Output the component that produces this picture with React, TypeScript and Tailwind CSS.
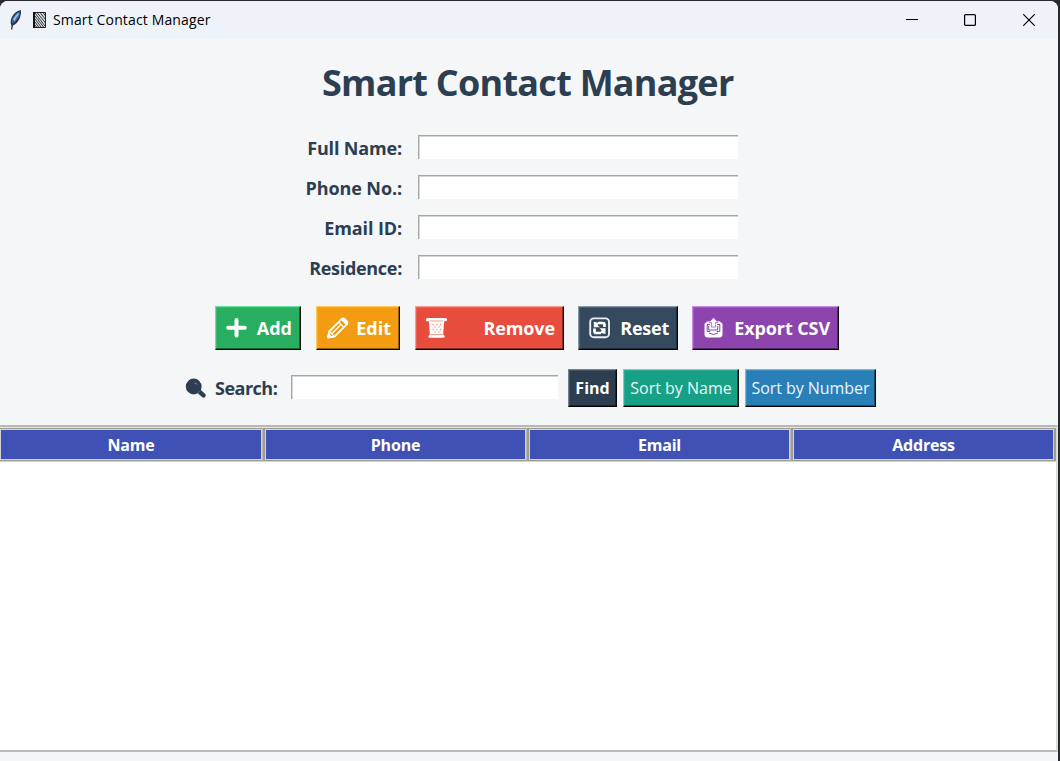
import type { ReactNode } from "react";

const fields = [
  { label: "Full Name:", tracking: "tracking-[-0.15px]" },
  { label: "Phone No.:", tracking: "tracking-[-0.1px]" },
  { label: "Email ID:", tracking: "tracking-[-0.1px]" },
  { label: "Residence:", tracking: "tracking-[-0.3px]" },
];

function Feather() {
  return (
    <svg className="h-[20px] w-[13px] shrink-0" viewBox="0 0 13 20">
      <path d="M11.300.8C8 1.500 3.500 5 2.500 10c-.4 2-.2 4 .5 5.200C6.300 14 9 11 10.500 7c.8-2.200 1.300-4.500.8-6.200Z" fill="#3d78bd" stroke="#2b3543" strokeWidth="1.300" />
      <path d="M9.500 3.500C7 6 5 9 3.800 13" fill="none" stroke="#9cc3ec" strokeWidth="1.500" />
      <path d="M4.500 10.500 2.500 19.500M10 8 5 14" fill="none" stroke="#333" strokeWidth="1.300" />
    </svg>
  );
}

function Notebook() {
  return (
    <svg className="h-[16px] w-[13px] shrink-0" viewBox="0 0 13 16">
      <path d="M.5.5h12v15H.5z" fill="#d8dbe0" stroke="#222" />
      <path d="M1 0v16" stroke="#111" strokeWidth="2" />
      <path d="m2 1 10 13M2 4l9 11.500M2 7l6.500 8.500M2 10l4 5.500M2 13l2 2.500M4 .5 12.500 11M7 .5l5.500 7M10 .5l2.500 3.500" stroke="#222" strokeWidth=".9" />
    </svg>
  );
}

function Plus() {
  return (
    <svg className="h-[22px] w-[22px]" viewBox="0 0 22 22">
      <path d="M10.500 3v15.500M2.200 10.700h16.600" stroke="white" strokeWidth="4" strokeLinecap="round" />
    </svg>
  );
}

function Pencil() {
  return (
    <svg className="h-[22px] w-[22px]" viewBox="0 0 22 22" fill="none" stroke="white" strokeLinejoin="round">
      <path d="m1 20.500 1.200-6L14.500 2.200c1-1 2.200-1 3.200 0l2 2c1 1 1 2.200 0 3.200L7.400 19.700 1 20.500Z" strokeWidth="1.800" />
      <path d="m14.500 2.800 4.500 4.500c1.800-1.500 1.500-2.700.5-3.700l-1.200-1.200c-1.200-1.200-2.500-1-3.800.4Z" fill="white" />
      <path d="m11.500 5 5 5M2.500 14.500l5 5M5 16.500l8.500-8.500" strokeWidth="1.300" />
      <path d="m.8 20.800.8-4 3.200 3.200Z" fill="white" />
    </svg>
  );
}

function Basket() {
  return (
    <svg className="h-[22px] w-[22px]" viewBox="0 0 22 22">
      <path d="M1.500 2.700h18" stroke="white" strokeWidth="3.200" strokeLinecap="round" />
      <path d="M2.700 3h15.600l-1.300 16h-13Z" fill="white" />
      <path d="M4 19.200h13" stroke="white" strokeWidth="3" strokeLinecap="round" />
      <path d="M4 4h13M4.500 17.500h12" stroke="#ee8175" strokeWidth=".8" />
      <path d="M6.500 7.500h1.200m2.500 0h1.200m2.500 0h1.200M8.500 10h1m3 0h1M6.500 12.500h1.200m2.500 0h1.200m2.500 0h1.200M8.500 15h1m3 0h1" stroke="#f18b80" strokeWidth="1.300" />
    </svg>
  );
}

function Refresh() {
  return (
    <svg className="h-[22px] w-[22px]" viewBox="0 0 22 22" fill="none">
      <rect x="1.200" y="1.400" width="18.800" height="18.800" rx="3.500" stroke="#e9eff5" strokeWidth="1.900" />
      <path d="M15.500 10V7.800c0-1-.8-1.800-1.800-1.800H9M5.500 11.500v2.700c0 1 .8 1.800 1.800 1.800H12" stroke="white" strokeWidth="2.700" />
      <path d="M4.800 4.700v5.600h6L8.500 8 10.300 6ZM16.500 17v-5.700h-6l2.300 2.300-1.800 2.200Z" fill="white" />
    </svg>
  );
}

function Outbox() {
  return (
    <svg className="h-[22px] w-[22px]" viewBox="0 0 22 22">
      <path d="M4.500 4.200h12l3 2.500v10.500c0 2-1 3.300-3 3.300h-12c-2 0-3-1.300-3-3.300V6.700Z" fill="white" />
      <path d="M4 7.500h3M14 7.500h3M4.200 7.500v7h3M16.800 7.500v7h-3M5.700 9v4h9V9M6 16l4.500 1.500L15 16" fill="none" stroke="#8e44ad" strokeWidth="1" />
      <path d="M10.500.8 14.800 5.500h-2.200V10H8.400V5.500H6.200Z" fill="white" stroke="#8e44ad" strokeWidth=".7" />
      <path d="M10.500 1 14 5H7Z" fill="white" />
    </svg>
  );
}

function Magnifier() {
  return (
    <svg className="h-[20px] w-[21px] shrink-0" viewBox="0 0 21 20">
      <circle cx="8.700" cy="8.500" r="7.900" fill="#2c3e50" />
      <path d="m13 12.500 5.500 4.800" stroke="#2c3e50" strokeWidth="4.400" strokeLinecap="round" />
      <path d="M9.500 4.800c1.200.1 2 .7 2.300 1.700" stroke="#8294a5" strokeWidth="1" fill="none" />
      <path d="m12.500 15 2.500-2.500" stroke="#6f8191" strokeWidth=".6" />
    </svg>
  );
}

function Entry({ className }: { className: string }) {
  return (
    <input className={`${className} h-6 border-t border-l border-t-[#a6a8a8] border-l-[#a6a8a8] bg-white shadow-[inset_1px_1px_0_#d5d6d6] outline-none`} />
  );
}

function ActionButton({ className, icon, label, text }: { className: string; icon: ReactNode; label: string; text: string }) {
  return (
    <button className={`${className} flex h-[44px] items-center justify-between border border-r-black/90 border-b-black shadow-[inset_-1px_-1px_0_rgba(0,0,0,0.4),inset_1px_1px_0_rgba(255,255,255,0.12)] pr-[8px] pl-[10px] text-[18px] font-bold text-white`}>
      {icon}
      <span className={`${text} whitespace-nowrap`}>{label}</span>
    </button>
  );
}

function HeaderCell({ children, className }: { children: string; className: string }) {
  return (
    <div className={`${className} flex h-[31px] shrink-0 items-center justify-center border border-[#d3d2d4] bg-[#3f51b5] pt-px text-[16px] font-bold tracking-[-0.2px] text-white`}>
      <span>{children}</span>
    </div>
  );
}

function Separator() {
  return <div className="h-[33px] w-[3px] shrink-0 border-l border-l-[#bcb8b2] bg-[#a09d98]" />;
}

export default function App() {
  return (
    <div className="h-[761px] w-[1060px] overflow-hidden bg-[#292a2e] pt-px pr-[2px] font-['Open_Sans','Noto_Sans',sans-serif] text-[#2c3e50]">
      <div className="flex h-[760px] flex-col overflow-hidden rounded-t-lg bg-[#f4f6f8]">
        <header className="flex h-[38px] shrink-0 items-center bg-[#eef3fa] pl-[9px] text-black">
          <Feather />
          <div className="w-[11px]" />
          <Notebook />
          <span className="ml-[7px] pb-[2px] text-[14px] tracking-[0.14px]">Smart Contact Manager</span>
          <div className="mr-[23px] ml-auto flex items-center">
            <svg className="mr-[46px] h-3 w-3" viewBox="0 0 12 12"><path d="M0 5.500h12" stroke="black" /></svg>
            <svg className="mr-[47px] h-3 w-3" viewBox="0 0 12 12"><rect x=".6" y=".6" width="10.800" height="10.800" rx="1" fill="none" stroke="black" strokeWidth="1.200" /></svg>
            <svg className="h-3 w-3" viewBox="0 0 12 12"><path d="m.3.300 11.400 11.400M11.700.300.300 11.700" stroke="black" strokeWidth="1.200" /></svg>
          </div>
        </header>

        <h1 className="mt-[19px] ml-[322px] h-[50px] text-[36px] leading-[50px] font-bold tracking-[-0.74px] whitespace-nowrap">
          <span>Smart Contact Manager</span>
        </h1>

        <form className="mt-[27px] flex flex-col gap-4">
          {fields.map((f) => (
            <label key={f.label} className="flex h-6 items-center">
              <span className={`${f.tracking} mr-[16px] w-[402px] text-right text-[18px] leading-6 font-bold`}><span className="relative top-px">{f.label}</span></span>
              <Entry className="w-80" />
            </label>
          ))}
        </form>

        <div className="mt-[27px] mb-px ml-[215px] flex">
          <ActionButton className="mr-[15px] w-[86px] border-t-[#69df9a] border-l-[#69df9a] bg-[#27ae60]" icon={<Plus />} label="Add" text="" />
          <ActionButton className="mr-[15px] w-[84px] border-t-[#ffc65b] border-l-[#ffc65b] bg-[#f39c12]" icon={<Pencil />} label="Edit" text="" />
          <ActionButton className="mr-[14px] w-[149px] border-t-[#ff9a8e] border-l-[#ff9a8e] bg-[#e74c3c]" icon={<Basket />} label="Remove" text="tracking-[-0.1px]" />
          <ActionButton className="mr-[14px] w-[100px] border-t-[#8596a6] border-l-[#8596a6] bg-[#34495e]" icon={<Refresh />} label="Reset" text="tracking-[-0.25px]" />
          <ActionButton className="w-[147px] border-t-[#c989e8] border-l-[#c989e8] bg-[#8e44ad]" icon={<Outbox />} label="Export CSV" text="tracking-[-0.1px]" />
        </div>

        <div className="mt-[18px] ml-[185px] flex h-[38px] items-center">
          <Magnifier />
          <span className="ml-[9px] w-[76px] text-[18px] font-bold tracking-[-0.5px]">Search:</span>
          <Entry className="mr-[10px] mb-[2px] w-[267px] shrink-0" />
          <button className="mr-[6px] h-[38px] w-[49px] border border-t-[#738191] border-r-black/90 border-b-black border-l-[#738191] bg-[#2c3e50] text-[16px] font-bold text-white shadow-[inset_-1px_-1px_0_rgba(0,0,0,0.4),inset_1px_1px_0_rgba(255,255,255,0.1)]">Find</button>
          <button className="mr-[6px] h-[38px] w-[116px] border border-t-[#62dbc0] border-r-black/90 border-b-black border-l-[#62dbc0] bg-[#16a085] text-[16px] whitespace-nowrap text-[#ecf8f5] shadow-[inset_-1px_-1px_0_rgba(0,0,0,0.4),inset_1px_1px_0_rgba(255,255,255,0.1)]">Sort by Name</button>
          <button className="h-[38px] w-[131px] border border-t-[#70b9ef] border-r-black/90 border-b-black border-l-[#70b9ef] bg-[#2980b9] text-[16px] tracking-[-0.05px] whitespace-nowrap text-[#ecf5fa] shadow-[inset_-1px_-1px_0_rgba(0,0,0,0.4),inset_1px_1px_0_rgba(255,255,255,0.1)]">Sort by Number</button>
        </div>

        <main className="mt-[18px] flex h-[327px] flex-col border-t-2 border-r-2 border-b-2 border-t-[#b9b8b2] border-r-[#dedad6] border-b-[#bfbab6] bg-white">
          <div className="border-t border-b border-t-[#e7e5df] border-b-[#d3d0cc]">
            <div className="flex h-[33px] items-center border-y border-y-[#a29f98]">
              <HeaderCell className="w-[262px]">Name</HeaderCell>
              <Separator />
              <HeaderCell className="w-[261px]">Phone</HeaderCell>
              <Separator />
              <HeaderCell className="w-[261px]">Email</HeaderCell>
              <Separator />
              <HeaderCell className="w-[261px]">Address</HeaderCell>
              <div className="h-[33px] w-[2px] shrink-0 bg-[#a09d98]" />
            </div>
          </div>
        </main>
      </div>
    </div>
  );
}
